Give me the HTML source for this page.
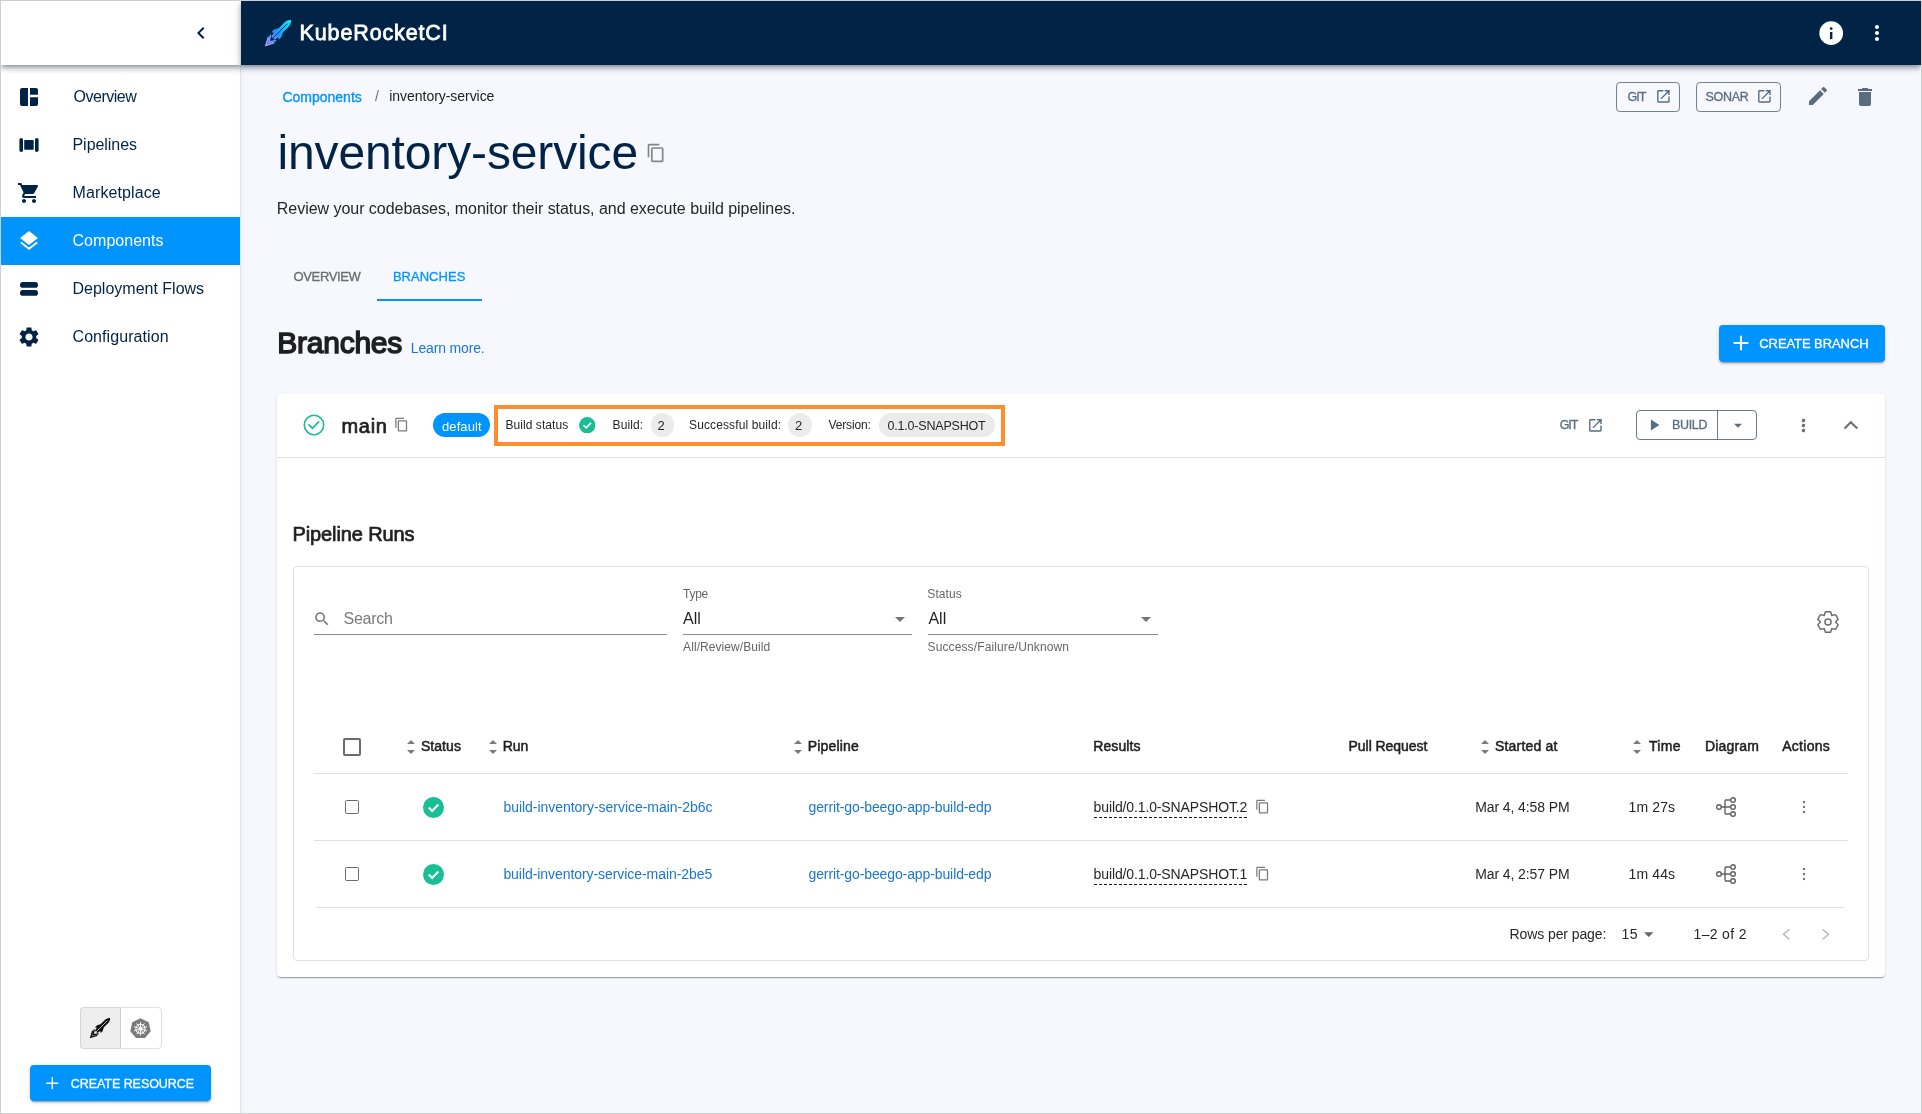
<!DOCTYPE html><html><head><meta charset="utf-8"><style>
html,body{margin:0;padding:0;}
body{width:1922px;height:1114px;position:relative;overflow:hidden;background:#cfcfcf;font-family:"Liberation Sans",sans-serif;}
.t{position:absolute;white-space:nowrap;font-family:"Liberation Sans",sans-serif;}
svg{display:block}
</style></head><body><div style="position:absolute;left:0;top:0;width:1922px;height:1114px;clip-path:inset(1px);"><div style="position:absolute;left:1px;top:1px;width:1920px;height:1112px;background:#f7f8fe;"></div>
<div style="position:absolute;left:1px;top:1px;width:239px;height:1112px;background:#fff;"></div>
<div style="position:absolute;left:240px;top:65px;width:1px;height:1048px;background:#e3e3e3;box-shadow:1px 0 3px rgba(40,50,90,.10);"></div>
<div style="position:absolute;left:1px;top:1px;width:240px;height:64px;background:#fff;box-shadow:0 2px 4px -1px rgba(20,30,40,.32),0 4px 5px 0 rgba(20,30,40,.2),0 1px 10px 0 rgba(20,30,40,.14);z-index:2"></div>
<div style="position:absolute;left:241px;top:1px;width:1680px;height:64px;background:#012346;box-shadow:0 2px 4px -1px rgba(1,20,50,.32),0 4px 5px 0 rgba(1,20,50,.2),0 1px 10px 0 rgba(1,20,50,.14);z-index:2"></div>
<div style="position:absolute;left:0;top:0;width:1922px;height:1114px;z-index:3;pointer-events:none;will-change:transform">
<svg style="position:absolute;left:189px;top:21px;" width="24" height="24" viewBox="0 0 24 24"><path fill="#012346" d="M15.41 7.41 14 6l-6 6 6 6 1.41-1.41L10.83 12z"/></svg>
<svg style="position:absolute;left:263px;top:18px;" width="30" height="30" viewBox="0 0 30 30"><defs><linearGradient id="rg" gradientUnits="userSpaceOnUse" x1="0" y1="1" x2="0" y2="36"><stop offset="0" stop-color="#00f4ff"/><stop offset=".5" stop-color="#1f95ff"/><stop offset="1" stop-color="#b39dff"/></linearGradient></defs><g transform="translate(28 2.1) rotate(45)"><path fill="url(#rg)" d="M0 0 C2 1.2 3 4 3 7 L3 21.5 L2.2 25.5 L-2.2 25.5 L-3 21.5 L-3 7 C-3 4 -2 1.2 0 0Z M3 14.5 L5.2 18.5 L5.2 22.5 L3 21Z M-3 14.5 L-5.2 18.5 L-5.2 22.5 L-3 21Z"/><path d="M0 5 V26" stroke="#012346" stroke-width="0.9"/><path d="M-4.2 27.6 L0 35.4 L4.2 27.6 M-4 24.8 L0 31.2 L4 24.8" fill="none" stroke="url(#rg)" stroke-width="1.7"/></g></svg>
<div class="t" style="left:299.60px;top:23px;font-size:21.5px;line-height:21.5px;color:#ffffff;-webkit-text-stroke:0.774px #ffffff;letter-spacing:0.864px;">KubeRocketCI</div>
<svg style="position:absolute;left:1816.8px;top:18.6px;" width="28.4" height="28.4" viewBox="0 0 24 24"><circle cx="12" cy="12" r="10" fill="#fff"/><path fill="#012346" d="M13 17h-2v-6h2v6z"/><circle cx="12" cy="8.1" r="1.15" fill="#012346"/></svg>
<svg style="position:absolute;left:1865px;top:21px;" width="24" height="24" viewBox="0 0 24 24"><path fill="#fff" d="M12 8c1.1 0 2-.9 2-2s-.9-2-2-2-2 .9-2 2 .9 2 2 2zm0 2c-1.1 0-2 .9-2 2s.9 2 2 2 2-.9 2-2-.9-2-2-2zm0 6c-1.1 0-2 .9-2 2s.9 2 2 2 2-.9 2-2-.9-2-2-2z"/></svg>
<div style="position:absolute;left:1px;top:217px;width:239px;height:48px;background:#0094ff;"></div>
<div class="t" style="left:73.50px;top:89px;font-size:16px;line-height:16px;color:#012346;letter-spacing:-0.486px;">Overview</div>
<div class="t" style="left:72.50px;top:137px;font-size:16px;line-height:16px;color:#012346;letter-spacing:-0.050px;">Pipelines</div>
<div class="t" style="left:72.50px;top:185px;font-size:16px;line-height:16px;color:#012346;letter-spacing:0.110px;">Marketplace</div>
<div class="t" style="left:72.50px;top:233px;font-size:16px;line-height:16px;color:#fff;letter-spacing:0.033px;">Components</div>
<div class="t" style="left:72.50px;top:281px;font-size:16px;line-height:16px;color:#012346;">Deployment Flows</div>
<div class="t" style="left:72.50px;top:329px;font-size:16px;line-height:16px;color:#012346;letter-spacing:0.075px;">Configuration</div>
<svg style="position:absolute;left:17px;top:85px;" width="24" height="24" viewBox="0 0 24 24"><path fill="#012346" d="M11 3V21H5A2 2 0 0 1 3 19V5A2 2 0 0 1 5 3Z M13 3H19A2 2 0 0 1 21 5V9.8H13Z M13 12.2H21V19A2 2 0 0 1 19 21H13Z"/></svg>
<svg style="position:absolute;left:17px;top:133px;" width="24" height="24" viewBox="0 0 24 24"><rect x="2.4" y="5" width="3.6" height="14" rx="1.8" fill="#012346"/><rect x="7.2" y="7" width="9.5" height="9.7" rx="0.8" fill="#012346"/><rect x="18" y="5" width="3.6" height="14" rx="1.8" fill="#012346"/></svg>
<svg style="position:absolute;left:17px;top:181px;" width="24" height="24" viewBox="0 0 24 24"><path fill="#012346" d="M7 18c-1.1 0-1.99.9-1.99 2S5.9 22 7 22s2-.9 2-2-.9-2-2-2zM1 2v2h2l3.6 7.59-1.35 2.45c-.16.28-.25.61-.25.96 0 1.1.9 2 2 2h12v-2H7.42c-.14 0-.25-.11-.25-.25l.03-.12.9-1.63h7.45c.75 0 1.41-.41 1.75-1.03l3.58-6.49c.08-.14.12-.31.12-.48 0-.55-.45-1-1-1H5.21l-.94-2H1zm16 16c-1.1 0-1.99.9-1.99 2s.89 2 1.99 2 2-.9 2-2-.9-2-2-2z"/></svg>
<svg style="position:absolute;left:17px;top:229px;" width="24" height="24" viewBox="0 0 24 24"><path fill="#fff" d="M11.99 18.54l-7.37-5.73L3 14.07l9 7 9-7-1.63-1.27-7.38 5.74zM12 16l7.36-5.73L21 9l-9-7-9 7 1.63 1.27L12 16z"/></svg>
<svg style="position:absolute;left:17px;top:277px;" width="24" height="24" viewBox="0 0 24 24"><rect x="3" y="5" width="18" height="5.8" rx="2.9" fill="#012346"/><rect x="3" y="13" width="18" height="5.8" rx="2.9" fill="#012346"/></svg>
<svg style="position:absolute;left:17px;top:325px;" width="24" height="24" viewBox="0 0 24 24"><path fill="#012346" d="M19.14 12.94c.04-.3.06-.61.06-.94 0-.32-.02-.64-.07-.94l2.03-1.58c.18-.14.23-.41.12-.61l-1.92-3.32c-.12-.22-.37-.29-.59-.22l-2.39.96c-.5-.38-1.03-.7-1.62-.94l-.36-2.54c-.04-.24-.24-.41-.48-.41h-3.84c-.24 0-.43.17-.47.41l-.36 2.54c-.59.24-1.13.57-1.62.94l-2.39-.96c-.22-.08-.47 0-.59.22L2.74 8.87c-.12.21-.08.47.12.61l2.03 1.58c-.05.3-.09.63-.09.94s.02.64.07.94l-2.03 1.58c-.18.14-.23.41-.12.61l1.92 3.32c.12.22.37.29.59.22l2.39-.96c.5.38 1.03.7 1.62.94l.36 2.54c.05.24.24.41.48.41h3.84c.24 0 .44-.17.47-.41l.36-2.54c.59-.24 1.13-.56 1.62-.94l2.39.96c.22.08.47 0 .59-.22l1.92-3.32c.12-.22.07-.47-.12-.61l-2.01-1.58zM12 15.6c-1.98 0-3.6-1.62-3.6-3.6s1.62-3.6 3.6-3.6 3.6 1.62 3.6 3.6-1.62 3.6-3.6 3.6z"/></svg>
<div style="position:absolute;left:80px;top:1007px;width:82px;height:42px;border:1px solid #e0e0e0;border-radius:4px;background:#fff;box-sizing:border-box;"></div>
<div style="position:absolute;left:80px;top:1007px;width:41px;height:42px;background:#eeeeee;border:1px solid #d6d6d6;border-right:1px solid #d0d0d0;border-radius:4px 0 0 4px;box-sizing:border-box;"></div>
<svg style="position:absolute;left:88px;top:1016px;" width="24" height="24" viewBox="0 0 24 24"><defs><linearGradient id="rk" x1="0" y1="0" x2="0" y2="1"><stop offset="0" stop-color="#111"/><stop offset="1" stop-color="#111"/></linearGradient></defs><g transform="translate(22 2) rotate(45) scale(.77)"><path fill="#111" d="M0 0 C2 1.2 3 4 3 7 L3 21.5 L2.2 25.5 L-2.2 25.5 L-3 21.5 L-3 7 C-3 4 -2 1.2 0 0Z M3 14.5 L5.2 18.5 L5.2 22.5 L3 21Z M-3 14.5 L-5.2 18.5 L-5.2 22.5 L-3 21Z"/><path d="M0 5 V26" stroke="#eee" stroke-width="0.9"/><path d="M-4.2 27.6 L0 35.4 L4.2 27.6 M-4 24.8 L0 31.2 L4 24.8" fill="none" stroke="#111" stroke-width="1.7"/></g></svg>
<svg style="position:absolute;left:130px;top:1018px;" width="21" height="20" viewBox="0 0 21 20"><polygon points="10.5,0.3 18.7,4.3 20.7,13.2 15,20 6,20 0.3,13.2 2.3,4.3" fill="#7a7a7a"/><g stroke="#fff" fill="none"><circle cx="10.5" cy="10.8" r="4.6" stroke-width="1.1"/><path stroke-width=".9" d="M10.5 4V17.6M4 8.6 17 13M4 13 17 8.6M6.6 16.2 14.4 5.4M14.4 16.2 6.6 5.4"/></g><circle cx="10.5" cy="10.8" r="1.2" fill="#fff"/></svg>
<div style="position:absolute;left:30px;top:1065px;width:181px;height:36px;background:#0094ff;border-radius:4px;box-shadow:0 3px 1px -2px rgba(0,0,0,.2),0 2px 2px 0 rgba(0,0,0,.14),0 1px 5px 0 rgba(0,0,0,.12);"></div>
<svg style="position:absolute;left:41.7px;top:1072.7px;" width="20.6" height="20.6" viewBox="0 0 24 24"><path fill="#fff" d="M19 12.85h-6.15V19h-1.7v-6.15H5v-1.7h6.15V5h1.7v6.15H19z"/></svg>
<div class="t" style="left:70.80px;top:1078px;font-size:12.5px;line-height:12.5px;color:#fff;-webkit-text-stroke:0.300px #fff;letter-spacing:-0.057px;">CREATE RESOURCE</div>
<div class="t" style="left:282.40px;top:90px;font-size:14px;line-height:14px;color:#0094ff;-webkit-text-stroke:0.336px #0094ff;">Components</div>
<div class="t" style="left:375.00px;top:89px;font-size:14px;line-height:14px;color:#6b6b6b;">/</div>
<div class="t" style="left:389.30px;top:89px;font-size:14px;line-height:14px;color:#222;letter-spacing:-0.044px;">inventory-service</div>
<div style="position:absolute;left:1616px;top:82px;width:64px;height:30px;border:1px solid #596d80;border-radius:4px;box-sizing:border-box;opacity:.85"></div>
<div class="t" style="left:1627.40px;top:91px;font-size:12.5px;line-height:12.5px;color:#596d80;-webkit-text-stroke:0.300px #596d80;letter-spacing:-0.900px;">GIT</div>
<svg style="position:absolute;left:1654.6px;top:87.6px;" width="16.8" height="16.8" viewBox="0 0 24 24"><path fill="#596d80" d="M19 19H5V5h7V3H5c-1.11 0-2 .9-2 2v14c0 1.1.89 2 2 2h14c1.1 0 2-.9 2-2v-7h-2v7zM14 3v2h3.59l-9.83 9.83 1.41 1.41L19 6.41V10h2V3h-7z"/></svg>
<div style="position:absolute;left:1696px;top:82px;width:85px;height:30px;border:1px solid #596d80;border-radius:4px;box-sizing:border-box;opacity:.85"></div>
<div class="t" style="left:1705.50px;top:91px;font-size:12.5px;line-height:12.5px;color:#596d80;-webkit-text-stroke:0.300px #596d80;letter-spacing:-0.300px;">SONAR</div>
<svg style="position:absolute;left:1756.3px;top:87.6px;" width="16.8" height="16.8" viewBox="0 0 24 24"><path fill="#596d80" d="M19 19H5V5h7V3H5c-1.11 0-2 .9-2 2v14c0 1.1.89 2 2 2h14c1.1 0 2-.9 2-2v-7h-2v7zM14 3v2h3.59l-9.83 9.83 1.41 1.41L19 6.41V10h2V3h-7z"/></svg>
<svg style="position:absolute;left:1805.5px;top:84.3px;" width="24" height="24" viewBox="0 0 24 24"><path fill="#596d80" d="M3 17.25V21h3.75L17.81 9.94l-3.75-3.75L3 17.25zM20.71 7.04c.39-.39.39-1.02 0-1.41l-2.34-2.34a.9959.9959 0 0 0-1.41 0l-1.83 1.83 3.75 3.75 1.83-1.83z"/></svg>
<svg style="position:absolute;left:1852.6px;top:85px;" width="24" height="24" viewBox="0 0 24 24"><path fill="#596d80" d="M6 19c0 1.1.9 2 2 2h8c1.1 0 2-.9 2-2V7H6v12zM19 4h-3.5l-1-1h-5l-1 1H5v2h14V4z"/></svg>
<div class="t" style="left:277.40px;top:129px;font-size:48px;line-height:48px;color:#012346;letter-spacing:-0.125px;">inventory-service</div>
<svg style="position:absolute;left:645.5px;top:142.8px;" width="20" height="20" viewBox="0 0 24 24"><path fill="#858585" d="M16 1H4c-1.1 0-2 .9-2 2v14h2V3h12V1zm3 4H8c-1.1 0-2 .9-2 2v14c0 1.1.9 2 2 2h11c1.1 0 2-.9 2-2V7c0-1.1-.9-2-2-2zm0 16H8V7h11v14z"/></svg>
<div class="t" style="left:276.80px;top:201px;font-size:16px;line-height:16px;color:#262626;letter-spacing:-0.035px;">Review your codebases, monitor their status, and execute build pipelines.</div>
<div class="t" style="left:293.50px;top:270px;font-size:13px;line-height:13px;color:#6b6b6b;-webkit-text-stroke:0.312px #6b6b6b;letter-spacing:-0.357px;">OVERVIEW</div>
<div class="t" style="left:392.90px;top:270px;font-size:13px;line-height:13px;color:#0094ff;-webkit-text-stroke:0.312px #0094ff;letter-spacing:0.029px;">BRANCHES</div>
<div style="position:absolute;left:377px;top:299px;width:105px;height:2px;background:#0094ff;"></div>
<div class="t" style="left:277.20px;top:328px;font-size:30px;line-height:30px;color:#1f1f1f;-webkit-text-stroke:1.500px #1f1f1f;letter-spacing:-0.229px;">Branches</div>
<div class="t" style="left:410.80px;top:341px;font-size:14px;line-height:14px;color:#1976d2;letter-spacing:-0.160px;">Learn more.</div>
<div style="position:absolute;left:1719px;top:325px;width:166px;height:37px;background:#0094ff;border-radius:4px;box-shadow:0 3px 1px -2px rgba(0,0,0,.2),0 2px 2px 0 rgba(0,0,0,.14),0 1px 5px 0 rgba(0,0,0,.12);"></div>
<svg style="position:absolute;left:1729px;top:331px;" width="24" height="24" viewBox="0 0 24 24"><path fill="#fff" d="M19 13h-6v6h-2v-6H5v-2h6V5h2v6h6v2z" transform="translate(12 12) scale(1.05) translate(-12 -12)"/></svg>
<div class="t" style="left:1759.30px;top:337px;font-size:13px;line-height:13px;color:#fff;-webkit-text-stroke:0.312px #fff;letter-spacing:-0.083px;">CREATE BRANCH</div>
<div style="position:absolute;left:277px;top:394px;width:1608px;height:583px;background:#fff;border-radius:4px;box-shadow:0 2px 1px -1px rgba(0,0,0,.2),0 1px 1px 0 rgba(0,0,0,.14),0 1px 3px 0 rgba(0,0,0,.12);"></div>
<div style="position:absolute;left:277px;top:457px;width:1608px;height:1px;background:#e0e0e0;"></div>
<svg style="position:absolute;left:301.5px;top:413.45px;" width="24" height="24" viewBox="0 0 24 24"><circle cx="12" cy="12" r="9.7" fill="none" stroke="#18be94" stroke-width="1.6"/><path d="M7 11.85 10.5 15.25 16.6 8.85" fill="none" stroke="#18be94" stroke-width="1.8" stroke-linecap="round" stroke-linejoin="round"/></svg>
<div class="t" style="left:341.50px;top:416px;font-size:20px;line-height:20px;color:#1f1f1f;-webkit-text-stroke:0.720px #1f1f1f;letter-spacing:0.700px;">main</div>
<svg style="position:absolute;left:394px;top:417.3px;" width="15" height="15" viewBox="0 0 24 24"><path fill="#7a7a7a" d="M16 1H4c-1.1 0-2 .9-2 2v14h2V3h12V1zm3 4H8c-1.1 0-2 .9-2 2v14c0 1.1.9 2 2 2h11c1.1 0 2-.9 2-2V7c0-1.1-.9-2-2-2zm0 16H8V7h11v14z"/></svg>
<div style="position:absolute;left:433px;top:413px;width:57px;height:24px;background:#0094ff;border-radius:12px;"></div>
<div class="t" style="left:442.00px;top:420px;font-size:13px;line-height:13px;color:#fff;letter-spacing:0.100px;">default</div>
<div style="position:absolute;left:494px;top:405px;width:511px;height:41px;border:4px solid #ff8c2f;box-sizing:border-box;"></div>
<div class="t" style="left:505.40px;top:419px;font-size:12px;line-height:12px;color:#262626;letter-spacing:0.073px;">Build status</div>
<svg style="position:absolute;left:578.8px;top:416.8px;" width="16.4" height="16.4" viewBox="0 0 24 24"><circle cx="12" cy="12" r="12" fill="#18be94"/><path d="M6.6 12.1 10.4 15.9 17.6 8.6" fill="none" stroke="#fff" stroke-width="2.4" stroke-linecap="butt"/></svg>
<div class="t" style="left:612.60px;top:419px;font-size:12px;line-height:12px;color:#262626;letter-spacing:0.100px;">Build:</div>
<div style="position:absolute;left:651px;top:413px;width:23px;height:24px;background:#ebebeb;border-radius:12px;"></div>
<div class="t" style="left:657.50px;top:419px;font-size:13px;line-height:13px;color:#262626;">2</div>
<div class="t" style="left:689.00px;top:419px;font-size:12px;line-height:12px;color:#262626;letter-spacing:0.125px;">Successful build:</div>
<div style="position:absolute;left:788px;top:413px;width:24px;height:24px;background:#ebebeb;border-radius:12px;"></div>
<div class="t" style="left:795.00px;top:419px;font-size:13px;line-height:13px;color:#262626;">2</div>
<div class="t" style="left:828.50px;top:419px;font-size:12px;line-height:12px;color:#262626;letter-spacing:-0.129px;">Version:</div>
<div style="position:absolute;left:879px;top:413px;width:116px;height:24px;background:#ebebeb;border-radius:12px;"></div>
<div class="t" style="left:887.50px;top:420px;font-size:12.5px;line-height:12.5px;color:#262626;letter-spacing:-0.192px;">0.1.0-SNAPSHOT</div>
<div class="t" style="left:1559.70px;top:419px;font-size:12.5px;line-height:12.5px;color:#596d80;-webkit-text-stroke:0.300px #596d80;letter-spacing:-1.050px;">GIT</div>
<svg style="position:absolute;left:1586.7px;top:416.6px;" width="16.8" height="16.8" viewBox="0 0 24 24"><path fill="#596d80" d="M19 19H5V5h7V3H5c-1.11 0-2 .9-2 2v14c0 1.1.89 2 2 2h14c1.1 0 2-.9 2-2v-7h-2v7zM14 3v2h3.59l-9.83 9.83 1.41 1.41L19 6.41V10h2V3h-7z"/></svg>
<div style="position:absolute;left:1636px;top:410px;width:121px;height:30px;border:1px solid #596d80;border-radius:4px;box-sizing:border-box;opacity:.9"></div>
<div style="position:absolute;left:1717px;top:410px;width:1px;height:30px;background:#596d80;opacity:.9"></div>
<svg style="position:absolute;left:1641.6px;top:413px;" width="24" height="24" viewBox="0 0 24 24"><path fill="#596d80" d="M8 5v14l11-7z" transform="translate(12 12) scale(.78) translate(-12 -12)"/></svg>
<div class="t" style="left:1672.00px;top:419px;font-size:12.5px;line-height:12.5px;color:#596d80;-webkit-text-stroke:0.300px #596d80;letter-spacing:-0.350px;">BUILD</div>
<svg style="position:absolute;left:1733.8px;top:423.2px;" width="8" height="5.5" viewBox="0 0 10 5"><path fill="#596d80" d="M0 0h10L5 5z"/></svg>
<div style="position:absolute;left:1801.5px;top:418.5px;width:3px;height:3px;background:#6b6b6b;transform:rotate(20deg)"></div>
<div style="position:absolute;left:1801.5px;top:423.5px;width:3px;height:3px;background:#6b6b6b;transform:rotate(20deg)"></div>
<div style="position:absolute;left:1801.5px;top:428.5px;width:3px;height:3px;background:#6b6b6b;transform:rotate(20deg)"></div>
<svg style="position:absolute;left:1843px;top:419px;" width="16" height="12" viewBox="0 0 16 12"><path d="M1.5 9.5 7.8 3.2 14.3 9.5" fill="none" stroke="#6e6e6e" stroke-width="2"/></svg>
<div class="t" style="left:292.50px;top:524px;font-size:20px;line-height:20px;color:#1f1f1f;-webkit-text-stroke:0.720px #1f1f1f;letter-spacing:-0.108px;">Pipeline Runs</div>
<div style="position:absolute;left:293px;top:566px;width:1576px;height:395px;border:1px solid #e0e0e0;border-radius:4px;box-sizing:border-box;"></div>
<svg style="position:absolute;left:312.5px;top:609.5px;" width="18" height="18" viewBox="0 0 24 24"><path fill="#757575" d="M15.5 14h-.79l-.28-.27C15.41 12.59 16 11.11 16 9.5 16 5.91 13.09 3 9.5 3S3 5.91 3 9.5 5.91 16 9.5 16c1.61 0 3.09-.59 4.23-1.57l.27.28v.79l5 4.99L20.49 19l-4.99-5zm-6 0C7.01 14 5 11.99 5 9.5S7.01 5 9.5 5 14 7.01 14 9.5 11.99 14 9.5 14z"/></svg>
<div class="t" style="left:343.50px;top:611px;font-size:16px;line-height:16px;color:#7a7a7a;letter-spacing:-0.240px;">Search</div>
<div style="position:absolute;left:314px;top:634px;width:353px;height:1px;background:#8c8c8c;"></div>
<div class="t" style="left:683.10px;top:588px;font-size:12px;line-height:12px;color:#666;letter-spacing:-0.300px;">Type</div>
<div class="t" style="left:683.10px;top:611px;font-size:16px;line-height:16px;color:#1f1f1f;letter-spacing:-0.050px;">All</div>
<svg style="position:absolute;left:895px;top:617px;" width="10" height="5" viewBox="0 0 10 5"><path fill="#757575" d="M0 0h10L5 5z"/></svg>
<div style="position:absolute;left:683px;top:634px;width:229px;height:1px;background:#8c8c8c;"></div>
<div class="t" style="left:683.10px;top:641px;font-size:12px;line-height:12px;color:#666;letter-spacing:0.067px;">All/Review/Build</div>
<div class="t" style="left:927.30px;top:588px;font-size:12px;line-height:12px;color:#666;letter-spacing:0.100px;">Status</div>
<div class="t" style="left:928.50px;top:611px;font-size:16px;line-height:16px;color:#1f1f1f;letter-spacing:-0.050px;">All</div>
<svg style="position:absolute;left:1141px;top:617px;" width="10" height="5" viewBox="0 0 10 5"><path fill="#757575" d="M0 0h10L5 5z"/></svg>
<div style="position:absolute;left:928px;top:634px;width:230px;height:1px;background:#8c8c8c;"></div>
<div class="t" style="left:927.50px;top:641px;font-size:12px;line-height:12px;color:#666;letter-spacing:0.127px;">Success/Failure/Unknown</div>
<svg style="position:absolute;left:1815px;top:608.8px;" width="26" height="26" viewBox="-13 -13 26 26"><path fill="none" stroke="#6b6b6b" stroke-width="1.45" stroke-linejoin="round" d="M-3.80 -6.58 L-2.60 -10.20 L2.60 -10.20 L3.80 -6.58 A7.6 7.6 0 0 1 3.80 -6.58 L7.53 -7.35 L10.13 -2.85 L7.60 0.00 A7.6 7.6 0 0 1 7.60 -0.00 L10.13 2.85 L7.53 7.35 L3.80 6.58 A7.6 7.6 0 0 1 3.80 6.58 L2.60 10.20 L-2.60 10.20 L-3.80 6.58 A7.6 7.6 0 0 1 -3.80 6.58 L-7.53 7.35 L-10.13 2.85 L-7.60 -0.00 A7.6 7.6 0 0 1 -7.60 -0.00 L-10.13 -2.85 L-7.53 -7.35 L-3.80 -6.58 A7.6 7.6 0 0 1 -3.80 -6.58Z"/><circle cx="0" cy="0" r="3.05" fill="none" stroke="#6b6b6b" stroke-width="1.45"/></svg>
<div style="position:absolute;left:343px;top:738px;width:18px;height:18px;border:2px solid #6b6b6b;border-radius:2px;box-sizing:border-box;"></div>
<svg style="position:absolute;left:407px;top:740px;" width="8" height="14" viewBox="0 0 8 14"><path fill="#7a7a7a" d="M0 4 4 0 8 4z M0 10 8 10 4 14z"/></svg>
<div class="t" style="left:420.90px;top:739px;font-size:14px;line-height:14px;color:#1f1f1f;-webkit-text-stroke:0.504px #1f1f1f;letter-spacing:0.060px;">Status</div>
<svg style="position:absolute;left:488.5px;top:740px;" width="8" height="14" viewBox="0 0 8 14"><path fill="#7a7a7a" d="M0 4 4 0 8 4z M0 10 8 10 4 14z"/></svg>
<div class="t" style="left:502.70px;top:739px;font-size:14px;line-height:14px;color:#1f1f1f;-webkit-text-stroke:0.504px #1f1f1f;">Run</div>
<svg style="position:absolute;left:793.8px;top:740px;" width="8" height="14" viewBox="0 0 8 14"><path fill="#7a7a7a" d="M0 4 4 0 8 4z M0 10 8 10 4 14z"/></svg>
<div class="t" style="left:807.70px;top:739px;font-size:14px;line-height:14px;color:#1f1f1f;-webkit-text-stroke:0.504px #1f1f1f;letter-spacing:0.186px;">Pipeline</div>
<div class="t" style="left:1093.30px;top:739px;font-size:14px;line-height:14px;color:#1f1f1f;-webkit-text-stroke:0.504px #1f1f1f;letter-spacing:0.083px;">Results</div>
<div class="t" style="left:1348.60px;top:739px;font-size:14px;line-height:14px;color:#1f1f1f;-webkit-text-stroke:0.504px #1f1f1f;letter-spacing:-0.064px;">Pull Request</div>
<svg style="position:absolute;left:1480.7px;top:740px;" width="8" height="14" viewBox="0 0 8 14"><path fill="#7a7a7a" d="M0 4 4 0 8 4z M0 10 8 10 4 14z"/></svg>
<div class="t" style="left:1495.00px;top:739px;font-size:14px;line-height:14px;color:#1f1f1f;-webkit-text-stroke:0.504px #1f1f1f;letter-spacing:0.189px;">Started at</div>
<svg style="position:absolute;left:1633.4px;top:740px;" width="8" height="14" viewBox="0 0 8 14"><path fill="#7a7a7a" d="M0 4 4 0 8 4z M0 10 8 10 4 14z"/></svg>
<div class="t" style="left:1649.00px;top:739px;font-size:14px;line-height:14px;color:#1f1f1f;-webkit-text-stroke:0.504px #1f1f1f;letter-spacing:0.333px;">Time</div>
<div class="t" style="left:1705.00px;top:739px;font-size:14px;line-height:14px;color:#1f1f1f;-webkit-text-stroke:0.504px #1f1f1f;letter-spacing:0.167px;">Diagram</div>
<div class="t" style="left:1782.20px;top:739px;font-size:14px;line-height:14px;color:#1f1f1f;-webkit-text-stroke:0.504px #1f1f1f;letter-spacing:0.283px;">Actions</div>
<div style="position:absolute;left:314px;top:773px;width:1534px;height:1px;background:#e0e0e0;"></div>
<div style="position:absolute;left:345px;top:800px;width:14px;height:14px;border:1.6px solid #6b6b6b;border-radius:1.5px;box-sizing:border-box;"></div>
<svg style="position:absolute;left:423.0px;top:797.0px;" width="21" height="21" viewBox="0 0 24 24"><circle cx="12" cy="12" r="12" fill="#18be94"/><path d="M6.6 12.1 10.4 15.9 17.6 8.6" fill="none" stroke="#fff" stroke-width="2.4" stroke-linecap="butt"/></svg>
<div class="t" style="left:503.40px;top:800px;font-size:14px;line-height:14px;color:#1976d2;letter-spacing:-0.031px;">build-inventory-service-main-2b6c</div>
<div class="t" style="left:808.50px;top:800px;font-size:14px;line-height:14px;color:#1976d2;letter-spacing:-0.107px;">gerrit-go-beego-app-build-edp</div>
<div class="t" style="left:1093.60px;top:800px;font-size:14px;line-height:14px;color:#262626;letter-spacing:-0.124px;">build/0.1.0-SNAPSHOT.2</div>
<div style="position:absolute;left:1094px;top:817px;width:153px;height:1px;background-image:linear-gradient(90deg,#111 60%,transparent 60%);background-size:5px 1px;"></div>
<svg style="position:absolute;left:1254.5px;top:799px;" width="15" height="15" viewBox="0 0 24 24"><path fill="#7a7a7a" d="M16 1H4c-1.1 0-2 .9-2 2v14h2V3h12V1zm3 4H8c-1.1 0-2 .9-2 2v14c0 1.1.9 2 2 2h11c1.1 0 2-.9 2-2V7c0-1.1-.9-2-2-2zm0 16H8V7h11v14z"/></svg>
<div class="t" style="left:1475.20px;top:800px;font-size:14px;line-height:14px;color:#262626;letter-spacing:-0.092px;">Mar 4, 4:58 PM</div>
<div class="t" style="left:1628.50px;top:800px;font-size:14px;line-height:14px;color:#262626;letter-spacing:0.140px;">1m 27s</div>
<svg style="position:absolute;left:1714px;top:797px;" width="24" height="20" viewBox="0 0 24 20"><g fill="none" stroke="#616161" stroke-width="1.4"><circle cx="5" cy="10" r="2.3"/><circle cx="19" cy="3" r="2.3"/><circle cx="19" cy="10" r="2.3"/><circle cx="19" cy="17" r="2.3"/><path d="M7.3 10H16.7M11 3.2V16.8M11 3H16.7M11 17H16.7"/></g></svg>
<div style="position:absolute;left:1803px;top:801px;width:2.2px;height:2.2px;background:#616161;transform:rotate(20deg)"></div>
<div style="position:absolute;left:1803px;top:806px;width:2.2px;height:2.2px;background:#616161;transform:rotate(20deg)"></div>
<div style="position:absolute;left:1803px;top:811px;width:2.2px;height:2.2px;background:#616161;transform:rotate(20deg)"></div>
<div style="position:absolute;left:314px;top:840px;width:1534px;height:1px;background:#e0e0e0;"></div>
<div style="position:absolute;left:345px;top:867px;width:14px;height:14px;border:1.6px solid #6b6b6b;border-radius:1.5px;box-sizing:border-box;"></div>
<svg style="position:absolute;left:423.0px;top:864.0px;" width="21" height="21" viewBox="0 0 24 24"><circle cx="12" cy="12" r="12" fill="#18be94"/><path d="M6.6 12.1 10.4 15.9 17.6 8.6" fill="none" stroke="#fff" stroke-width="2.4" stroke-linecap="butt"/></svg>
<div class="t" style="left:503.40px;top:867px;font-size:14px;line-height:14px;color:#1976d2;letter-spacing:-0.062px;">build-inventory-service-main-2be5</div>
<div class="t" style="left:808.50px;top:867px;font-size:14px;line-height:14px;color:#1976d2;letter-spacing:-0.107px;">gerrit-go-beego-app-build-edp</div>
<div class="t" style="left:1093.60px;top:867px;font-size:14px;line-height:14px;color:#262626;letter-spacing:-0.124px;">build/0.1.0-SNAPSHOT.1</div>
<div style="position:absolute;left:1094px;top:884px;width:153px;height:1px;background-image:linear-gradient(90deg,#111 60%,transparent 60%);background-size:5px 1px;"></div>
<svg style="position:absolute;left:1254.5px;top:866px;" width="15" height="15" viewBox="0 0 24 24"><path fill="#7a7a7a" d="M16 1H4c-1.1 0-2 .9-2 2v14h2V3h12V1zm3 4H8c-1.1 0-2 .9-2 2v14c0 1.1.9 2 2 2h11c1.1 0 2-.9 2-2V7c0-1.1-.9-2-2-2zm0 16H8V7h11v14z"/></svg>
<div class="t" style="left:1475.20px;top:867px;font-size:14px;line-height:14px;color:#262626;letter-spacing:-0.092px;">Mar 4, 2:57 PM</div>
<div class="t" style="left:1628.50px;top:867px;font-size:14px;line-height:14px;color:#262626;letter-spacing:0.140px;">1m 44s</div>
<svg style="position:absolute;left:1714px;top:864px;" width="24" height="20" viewBox="0 0 24 20"><g fill="none" stroke="#616161" stroke-width="1.4"><circle cx="5" cy="10" r="2.3"/><circle cx="19" cy="3" r="2.3"/><circle cx="19" cy="10" r="2.3"/><circle cx="19" cy="17" r="2.3"/><path d="M7.3 10H16.7M11 3.2V16.8M11 3H16.7M11 17H16.7"/></g></svg>
<div style="position:absolute;left:1803px;top:868px;width:2.2px;height:2.2px;background:#616161;transform:rotate(20deg)"></div>
<div style="position:absolute;left:1803px;top:873px;width:2.2px;height:2.2px;background:#616161;transform:rotate(20deg)"></div>
<div style="position:absolute;left:1803px;top:878px;width:2.2px;height:2.2px;background:#616161;transform:rotate(20deg)"></div>
<div style="position:absolute;left:316px;top:907px;width:1529px;height:1px;background:#e0e0e0;"></div>
<div class="t" style="left:1509.60px;top:927px;font-size:14px;line-height:14px;color:#262626;letter-spacing:-0.100px;">Rows per page:</div>
<div class="t" style="left:1621.40px;top:927px;font-size:14px;line-height:14px;color:#262626;letter-spacing:0.600px;">15</div>
<svg style="position:absolute;left:1644.4px;top:932px;" width="9.5" height="5.4" viewBox="0 0 10 5"><path fill="#666" d="M0 0h10L5 5z"/></svg>
<div class="t" style="left:1693.50px;top:927px;font-size:14px;line-height:14px;color:#262626;letter-spacing:0.343px;">1–2 of 2</div>
<svg style="position:absolute;left:1778px;top:922px;" width="16" height="24" viewBox="0 0 16 24"><path d="M11.4 7.3 5.4 12.3 11.4 17.3" fill="none" stroke="#bdbdbd" stroke-width="1.5"/></svg>
<svg style="position:absolute;left:1818px;top:922px;" width="16" height="24" viewBox="0 0 16 24"><path d="M4.6 7.3 10.6 12.3 4.6 17.3" fill="none" stroke="#bdbdbd" stroke-width="1.5"/></svg>
</div></div></body></html>
